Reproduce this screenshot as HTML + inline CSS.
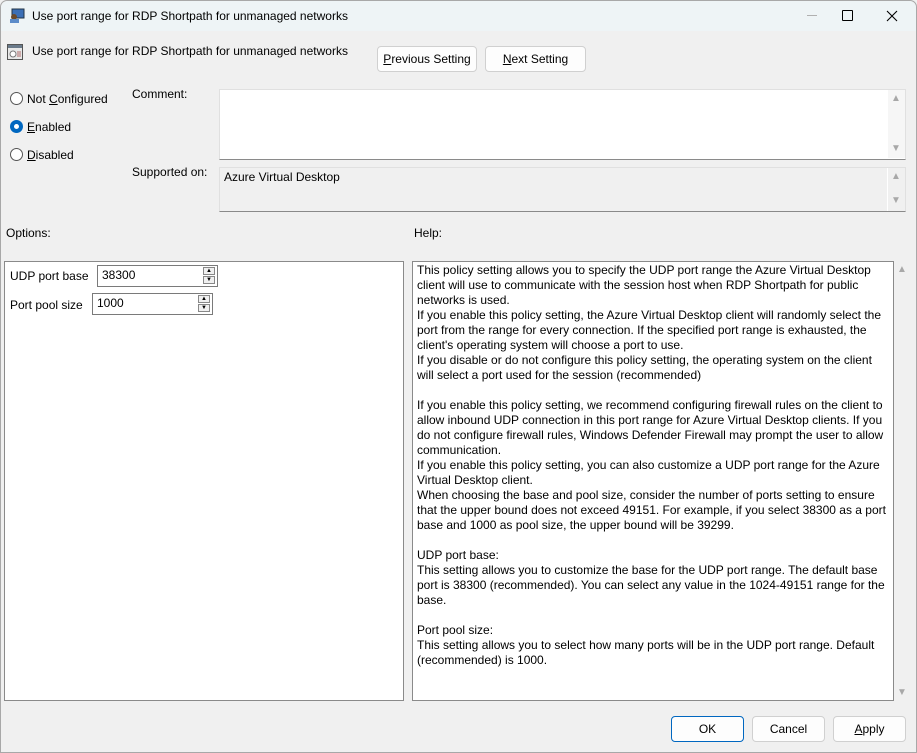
<!DOCTYPE html>
<html><head><style>
*{box-sizing:border-box;margin:0;padding:0}
body{width:917px;height:753px;background:#f0f0f0;font-family:"Liberation Sans",sans-serif;font-size:12px;color:#000;position:relative;overflow:hidden}
.a{position:absolute;white-space:nowrap}
.win{position:absolute;left:0;top:0;width:917px;height:753px;border:1px solid #a8a8a8;border-radius:7px 7px 0 0}
.title{position:absolute;left:1px;top:1px;width:915px;height:30px;background:#eef4f6;border-radius:7px 7px 0 0}
.btn{position:absolute;height:26px;background:#fdfdfd;border:1px solid #d0d0d0;border-radius:4px;text-align:center;line-height:24px;font-size:12px}
.radio{position:absolute;width:13px;height:13px;border:1px solid #555;border-radius:50%;background:#fff}
.box{position:absolute;border:1px solid #c8c8c8}
.sb{position:absolute;color:#a8a8a8;font-size:10px}
.help div{height:15px;line-height:15px}
.spin{position:absolute;background:#fff;border:1px solid #7a7a7a;height:22px;padding:2px 0 0 4px;font-size:12px}
.spb{position:absolute;right:2px;width:12px;height:8px;border:1px solid #888;background:#f0f0f0;font-size:6px;line-height:6px;text-align:center}
u{text-decoration:underline}
</style></head><body>
<div class="win"></div>
<div class="title"></div>
<svg class="a" style="left:9px;top:8px" width="16" height="16"><rect x="3" y="1" width="12" height="9" fill="#3b6fb6" stroke="#234" stroke-width="1"/><circle cx="5" cy="9" r="3" fill="#6b4a2b"/><rect x="1" y="11" width="9" height="4" fill="#5b8bc9"/></svg>
<div class="a" style="left:32px;top:9px;font-size:12px">Use port range for RDP Shortpath for unmanaged networks</div>
<div class="a" style="left:807px;top:15px;width:10px;height:1px;background:#b0b0b0"></div>
<div class="a" style="left:842px;top:10px;width:11px;height:11px;border:1px solid #000;border-radius:1px"></div>
<svg class="a" style="left:886px;top:10px" width="12" height="12"><path d="M1 1L11 11M11 1L1 11" stroke="#000" stroke-width="1.1"/></svg>
<svg class="a" style="left:7px;top:44px" width="17" height="17"><rect x="0.5" y="0.5" width="15" height="15" fill="#e8e8e8" stroke="#555"/><rect x="1" y="1" width="14" height="3" fill="#6a7a8a"/><circle cx="6" cy="10" r="3" fill="#fff" stroke="#777"/><rect x="10" y="7" width="4" height="6" fill="#caa"/></svg>
<div class="a" style="left:32px;top:44px">Use port range for RDP Shortpath for unmanaged networks</div>
<div class="btn" style="left:377px;top:46px;width:100px"><u>P</u>revious Setting</div>
<div class="btn" style="left:485px;top:46px;width:101px"><u>N</u>ext Setting</div>

<div class="radio" style="left:10px;top:92px"></div>
<div class="a" style="left:27px;top:92px">Not <u>C</u>onfigured</div>
<div class="radio" style="left:10px;top:120px;border:4px solid #0067c0"></div>
<div class="a" style="left:27px;top:120px"><u>E</u>nabled</div>
<div class="radio" style="left:10px;top:148px"></div>
<div class="a" style="left:27px;top:148px"><u>D</u>isabled</div>

<div class="a" style="left:132px;top:87px">Comment:</div>
<div class="box" style="left:219px;top:89px;width:687px;height:71px;background:#fff;border-color:#e0e0e0;border-bottom:1px solid #8a8a8a"></div>
<div class="a" style="left:888px;top:90px;width:17px;height:68px;background:#f6f6f6"></div>
<div class="sb a" style="left:891px;top:93px">▲</div>
<div class="sb a" style="left:891px;top:143px">▼</div>
<div class="a" style="left:132px;top:165px">Supported on:</div>
<div class="box" style="left:219px;top:167px;width:687px;height:45px;background:#f0f0f0;border-color:#e0e0e0;border-bottom:1px solid #8a8a8a"></div>
<div class="a" style="left:887px;top:168px;width:1px;height:43px;background:#fff"></div>
<div class="a" style="left:224px;top:170px">Azure Virtual Desktop</div>
<div class="sb a" style="left:891px;top:171px">▲</div>
<div class="sb a" style="left:891px;top:195px">▼</div>

<div class="a" style="left:6px;top:226px">Options:</div>
<div class="a" style="left:414px;top:226px">Help:</div>

<div class="box" style="left:4px;top:261px;width:400px;height:440px;background:#fff;border-color:#8a8a8a"></div>
<div class="a" style="left:10px;top:269px">UDP port base</div>
<div class="spin" style="left:97px;top:265px;width:121px">38300<div class="spb" style="top:1px">▲</div><div class="spb" style="top:10px">▼</div></div>
<div class="a" style="left:10px;top:298px">Port pool size</div>
<div class="spin" style="left:92px;top:293px;width:121px">1000<div class="spb" style="top:1px">▲</div><div class="spb" style="top:10px">▼</div></div>

<div class="box" style="left:412px;top:261px;width:482px;height:440px;background:#fff;border-color:#8a8a8a"></div>
<div class="sb a" style="left:897px;top:264px">▲</div>
<div class="sb a" style="left:897px;top:687px">▼</div>
<div class="a help" style="left:417px;top:263px;font-size:12px">
<div>This policy setting allows you to specify the UDP port range the Azure Virtual Desktop</div>
<div>client will use to communicate with the session host when RDP Shortpath for public</div>
<div>networks is used.</div>
<div>If you enable this policy setting, the Azure Virtual Desktop client will randomly select the</div>
<div>port from the range for every connection. If the specified port range is exhausted, the</div>
<div>client's operating system will choose a port to use.</div>
<div>If you disable or do not configure this policy setting, the operating system on the client</div>
<div>will select a port used for the session (recommended)</div>
<div></div>
<div>If you enable this policy setting, we recommend configuring firewall rules on the client to</div>
<div>allow inbound UDP connection in this port range for Azure Virtual Desktop clients. If you</div>
<div>do not configure firewall rules, Windows Defender Firewall may prompt the user to allow</div>
<div>communication.</div>
<div>If you enable this policy setting, you can also customize a UDP port range for the Azure</div>
<div>Virtual Desktop client.</div>
<div>When choosing the base and pool size, consider the number of ports setting to ensure</div>
<div>that the upper bound does not exceed 49151. For example, if you select 38300 as a port</div>
<div>base and 1000 as pool size, the upper bound will be 39299.</div>
<div></div>
<div>UDP port base:</div>
<div>This setting allows you to customize the base for the UDP port range. The default base</div>
<div>port is 38300 (recommended). You can select any value in the 1024-49151 range for the</div>
<div>base.</div>
<div></div>
<div>Port pool size:</div>
<div>This setting allows you to select how many ports will be in the UDP port range. Default</div>
<div>(recommended) is 1000.</div>
</div>

<div class="btn" style="left:671px;top:716px;width:73px;border:1px solid #0067c0">OK</div>
<div class="btn" style="left:752px;top:716px;width:73px">Cancel</div>
<div class="btn" style="left:833px;top:716px;width:73px"><u>A</u>pply</div>
</body></html>
